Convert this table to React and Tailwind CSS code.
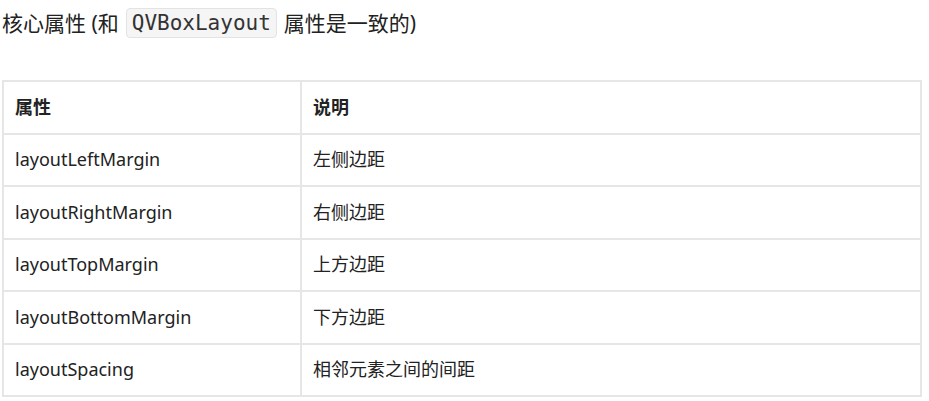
const rows = [
  ["layoutLeftMargin", "左侧边距"],
  ["layoutRightMargin", "右侧边距"],
  ["layoutTopMargin", "上方边距"],
  ["layoutBottomMargin", "下方边距"],
  ["layoutSpacing", "相邻元素之间的间距"],
];

const App = () => {
  return (
    <div className="min-h-[401px] w-[929px] bg-white pl-[2px] pt-[8px] text-[#222] font-['Noto_Sans','Noto_Sans_CJK_SC',sans-serif]">
      <p className="flex h-[30px] items-center text-[21px] leading-[30px]">
        <span>核心属性 (和</span>
        <code className="mx-[7px] rounded-[4px] border border-[#e3e3e3] bg-[#f5f5f5] px-[5px] font-['DejaVu_Sans_Mono',monospace] text-[21px] leading-[28px] text-[#333]">
          QVBoxLayout
        </code>
        <span>属性是一致的)</span>
      </p>

      <table className="mt-[42px] w-[920px] border-collapse text-[18px]">
        <thead>
          <tr className="h-[52.5px]">
            <th className="w-[298px] border-2 border-[#e6e6e6] px-[11px] text-left font-bold">
              属性
            </th>
            <th className="border-2 border-[#e6e6e6] px-[11px] text-left font-bold">
              说明
            </th>
          </tr>
        </thead>
        <tbody>
          {rows.map(([name, desc]) => (
            <tr key={name} className="h-[52.5px]">
              <td className="border-2 border-[#e6e6e6] px-[11px]">{name}</td>
              <td className="border-2 border-[#e6e6e6] px-[11px]">{desc}</td>
            </tr>
          ))}
        </tbody>
      </table>
    </div>
  );
};

export default App;
